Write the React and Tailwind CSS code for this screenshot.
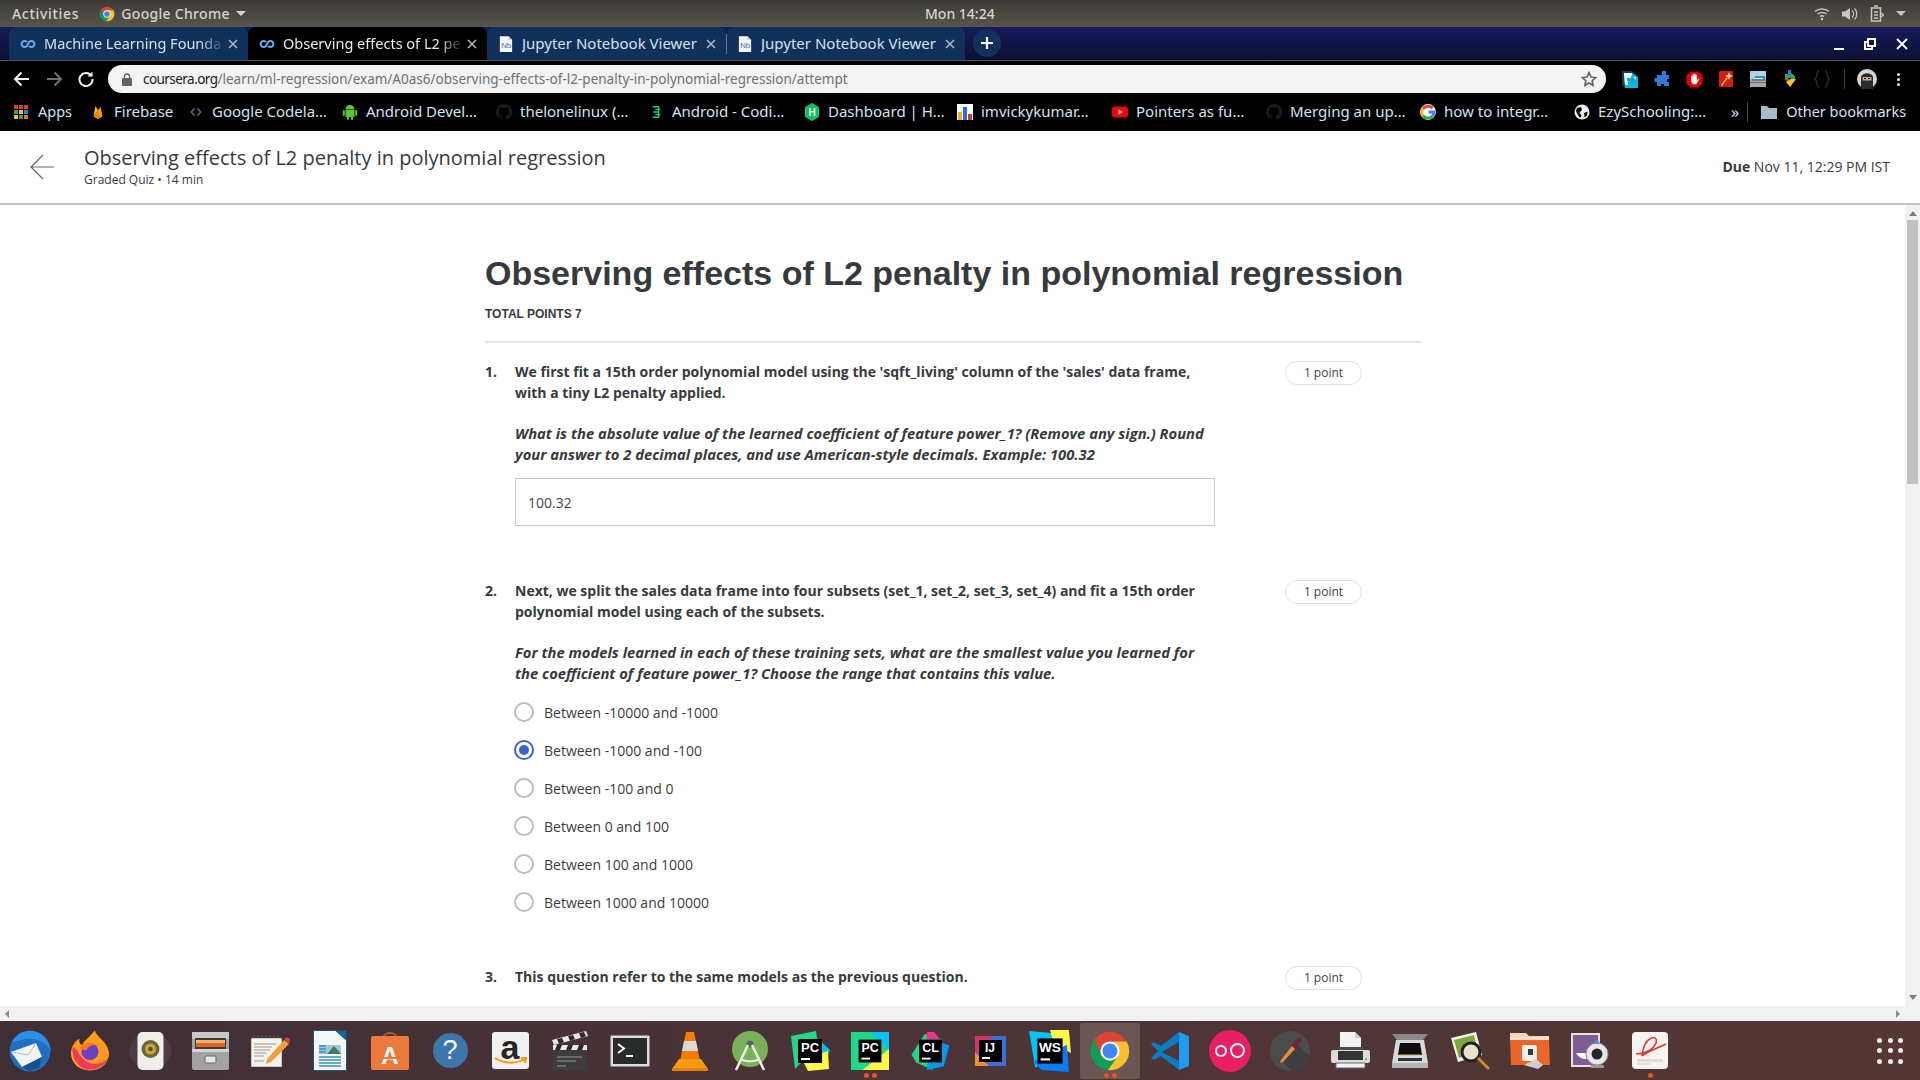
import React from 'react';

const UI_FONT = 'font-["Noto_Sans",sans-serif]';

const ChromeLogo = ({ size = 16 }) => (
  <svg width={size} height={size} viewBox="0 0 48 48">
    <path d="M5.9 11.5A22 22 0 0 1 43.05 13H24L14.47 29.5Z" fill="#db4437" />
    <path d="M5.9 11.5L14.47 29.5H33.53L21.5 45.9A22 22 0 0 1 5.9 11.5Z" fill="#0f9d58" />
    <path d="M43.05 13A22 22 0 0 1 21.5 45.9L33.53 29.5L24 13Z" fill="#fbc02d" />
    <circle cx="24" cy="24" r="11" fill="#fff" />
    <circle cx="24" cy="24" r="8.6" fill="#4285f4" />
  </svg>
);

const CourseraIcon = () => (
  <svg width="16" height="16" viewBox="0 0 16 16" fill="none" stroke="#6ea8e8" strokeWidth="2">
    <path d="M7 6.2A3 3 0 1 0 7 9.8L9 6.2A3 3 0 1 1 9 9.8" />
  </svg>
);

const NotebookIcon = () => (
  <svg width="14" height="16" viewBox="0 0 16 18">
    <path d="M1 0H11L15 4V18H1Z" fill="#f4f6f8" />
    <path d="M11 0L15 4H11Z" fill="#b6c2ce" />
    <text x="2.5" y="14" fontSize="9" fontFamily="Liberation Sans" fill="#3f6fb5">Nb</text>
  </svg>
);

const GithubMark = () => (
  <svg width="16" height="16" viewBox="0 0 16 16" fill="#1b1b1b">
    <path d="M8 0a8 8 0 0 0-2.5 15.6c.4.1.5-.2.5-.4v-1.4c-2.2.5-2.7-1-2.7-1-.4-.9-.9-1.2-.9-1.2-.7-.5.1-.5.1-.5.8.1 1.2.8 1.2.8.7 1.2 1.9.9 2.3.7.1-.5.3-.9.5-1.1-1.8-.2-3.6-.9-3.6-4 0-.9.3-1.6.8-2.1-.1-.2-.4-1 .1-2.1 0 0 .7-.2 2.2.8a7.6 7.6 0 0 1 4 0c1.5-1 2.2-.8 2.2-.8.4 1.1.2 1.9.1 2.1.5.5.8 1.2.8 2.1 0 3.1-1.9 3.8-3.7 4 .3.3.6.8.6 1.5v2.2c0 .2.1.5.6.4A8 8 0 0 0 8 0Z" />
  </svg>
);

const AppsGrid = () => (
  <div className="grid grid-cols-3 gap-[1px] w-[14px] h-[14px]">
    {['#e53935', '#e53935', '#e53935', '#43a047', '#fbc02d', '#1e88e5', '#fbc02d', '#43a047', '#e57b25'].map((color, i) => (
      <span key={i} className="block" style={{ backgroundColor: color }} />
    ))}
  </div>
);

const bookmarks = [
  {
    label: 'Firebase',
    width: 98,
    icon: (
      <svg width="14" height="18" viewBox="0 0 16 18">
        <path d="M3 14L5 2L8 7Z" fill="#ffc107" />
        <path d="M3 14L11 3L13 14L8 17Z" fill="#ffa000" />
        <path d="M3 14L8 8L11 14L8 17Z" fill="#f57c00" />
      </svg>
    ),
  },
  {
    label: 'Google Codela…',
    width: 154,
    icon: (
      <svg width="12" height="14" viewBox="0 0 16 16" fill="none" stroke="#4e6272" strokeWidth="2.5">
        <path d="M6 3L2 8L6 13M10 3L14 8L10 13" />
      </svg>
    ),
  },
  {
    label: 'Android Devel…',
    width: 154,
    icon: (
      <svg width="16" height="18" viewBox="0 0 16 18" fill="#5fc33b">
        <path d="M3.5 6.5a4.5 4.5 0 0 1 9 0Z" />
        <rect x="3.5" y="7" width="9" height="7" />
        <rect x="0.8" y="7" width="2" height="6" rx="1" />
        <rect x="13.2" y="7" width="2" height="6" rx="1" />
        <rect x="5" y="13" width="2" height="4" rx="1" />
        <rect x="9" y="13" width="2" height="4" rx="1" />
      </svg>
    ),
  },
  { label: 'thelonelinux (…', width: 152, icon: <GithubMark /> },
  {
    label: 'Android - Codi…',
    width: 156,
    icon: (
      <svg width="14" height="16" viewBox="0 0 16 16" fill="none" stroke="#2ecc71" strokeWidth="1.5">
        <path d="M4 2H11V14H4M7 5H13M5 8H11M7 11H13" />
      </svg>
    ),
  },
  {
    label: 'Dashboard | H…',
    width: 153,
    icon: (
      <svg width="16" height="18" viewBox="0 0 16 18">
        <path d="M8 0L15 4V14L8 18L1 14V4Z" fill="#12c25d" />
        <text x="8" y="13" textAnchor="middle" fontSize="10" fontWeight="700" fontFamily="Liberation Sans" fill="#fff">H</text>
      </svg>
    ),
  },
  {
    label: 'imvickykumar…',
    width: 155,
    icon: (
      <svg width="16" height="16" viewBox="0 0 16 16">
        <rect width="16" height="16" fill="#fff" />
        <rect x="1" y="8" width="4" height="8" fill="#f5a623" />
        <rect x="6" y="3" width="4" height="13" fill="#2a6fd6" />
        <rect x="11" y="10" width="4" height="6" fill="#d0392b" />
      </svg>
    ),
  },
  {
    label: 'Pointers as fu…',
    width: 154,
    icon: (
      <svg width="16" height="16" viewBox="0 0 16 16">
        <rect y="2.5" width="16" height="11" rx="3" fill="#ff0000" />
        <path d="M6.5 5.5L11 8L6.5 10.5Z" fill="#fff" />
      </svg>
    ),
  },
  { label: 'Merging an up…', width: 154, icon: <GithubMark /> },
  {
    label: 'how to integr…',
    width: 154,
    icon: (
      <svg width="16" height="16" viewBox="0 0 16 16" fill="none" strokeWidth="3">
        <circle cx="8" cy="8" r="7.9" fill="#fff" stroke="none" />
        <path d="M12.500 4.200A6 6 0 0 0 3 5" stroke="#ea4335" />
        <path d="M3 4.500A6 6 0 0 0 3 11.500" stroke="#fbbc05" />
        <path d="M3 11.500A6 6 0 0 0 12.500 12" stroke="#34a853" />
        <path d="M12.500 12A6 6 0 0 0 14 8H8.500" stroke="#4285f4" />
      </svg>
    ),
  },
  {
    label: 'EzySchooling:…',
    width: 154,
    icon: (
      <svg width="16" height="16" viewBox="0 0 16 16">
        <circle cx="8" cy="8" r="7.5" fill="#eceff1" />
        <path d="M3 4L7 3L8 6L5.5 8.5L7.5 11.5L6 14L3.5 10.5L2 7ZM10 9L13.5 7.5L13 11.5L10.5 13.5Z" fill="#000" />
      </svg>
    ),
  },
];

const extensions = [
  <svg key="a" width="16" height="17" viewBox="0 0 16 17">
    <path d="M0 0H10L15 5V17H3L0 14Z" fill="#123f66" />
    <path d="M2 2H10L16 6V17H3Z" fill="#10b4e0" />
    <path d="M2 2H10V6H14V9H6V14L3 14Z" fill="#f4fbfd" />
    <path d="M5 7H9V4.500L14 8.500L9 12.500V10H5Z" fill="#0fa7d8" />
  </svg>,
  <svg key="b" width="16" height="18" viewBox="0 0 16 18" fill="#2f7bd6">
    <path d="M8 1H12V5H15V9H13V12H15V16H10V14H7V16H3V12H0.5V8H3V5H8Z" />
  </svg>,
  <svg key="c" width="17" height="17" viewBox="0 0 18 18">
    <path d="M5 0.5H13L17.5 5V13L13 17.5H5L0.5 13V5Z" fill="#e60000" />
    <path d="M5.500 8V5H7V8.500V3.500H8.500V8V3H10V8V4H11.500V10L13 8L14 8.500L11 14H7.500L5.500 11.500Z" fill="#fff" />
  </svg>,
  <svg key="d" width="14" height="16" viewBox="0 0 14 16">
    <rect width="14" height="16" rx="1" fill="#d61a1a" />
    <path d="M2 14L8 6L9 7L3 15Z" fill="#f5c518" />
    <path d="M10 1L11 4L14 5L11 6L10 9L9 6L6 5L9 4Z" fill="#fff4c2" />
  </svg>,
  <svg key="e" width="16" height="16" viewBox="0 0 16 16">
    <rect width="16" height="8" fill="#a9d7ea" />
    <rect y="8" width="16" height="8" fill="#a7a7a4" />
    <path d="M2 8L6 5H15V10H2Z" fill="#4a86ad" />
    <rect x="3" y="7" width="10" height="1" fill="#e7f3f9" />
    <rect y="11" width="16" height="1" fill="#6b6b6b" />
  </svg>,
  <svg key="f" width="12" height="18" viewBox="0 0 12 18">
    <rect x="4" y="0" width="3" height="8" fill="#2f7bd6" />
    <rect x="1" y="4" width="3" height="6" fill="#2ea84f" />
    <path d="M7 3L11 6V10H7Z" fill="#2ea84f" />
    <path d="M0 9H7V14Z" fill="#d93025" />
    <path d="M7 9H12L6 17L2 12Z" fill="#fbc02d" />
  </svg>,
  <svg key="g" width="16" height="18" viewBox="0 0 16 18" fill="none" stroke="#2a2a2a" strokeWidth="1.5">
    <path d="M5 1C2 1 3.5 8 1 9C3.5 10 2 17 5 17M11 1C14 1 12.500 8 15 9C12.500 10 14 17 11 17" />
  </svg>,
];

const Arrow = ({ flip, color }) => (
  <svg width="18" height="16" viewBox="0 0 18 16" fill="none" stroke={color} strokeWidth="2" className={flip ? 'rotate-180' : ''}>
    <path d="M16 8H2M8.5 1.5L2 8L8.5 14.5" />
  </svg>
);

const Tab = ({ title, active, icon, fade, divider }) => (
  <div
    className={`relative flex items-center w-[239px] h-[33px] shrink-0 pl-[10px] pr-[10px] rounded-t-[8px] ${
      active ? 'bg-black text-[#e8edf2]' : 'bg-[#10315c] text-[#d5e2ef]'
    }`}
  >
    {divider && <span className="absolute left-0 top-[7px] h-[20px] w-px bg-[#5d7289]" />}
    <span className="w-[18px] flex justify-center shrink-0">{icon}</span>
    <span
      className={`ml-[7px] flex-1 overflow-hidden whitespace-nowrap ${
        fade ? 'text-[14.5px] [mask-image:linear-gradient(to_right,black_86%,transparent)]' : 'text-[15px]'
      }`}
    >
      {title}
    </span>
    <svg width="10" height="10" viewBox="0 0 10 10" stroke="#a9b7c6" strokeWidth="1.6" className="ml-[3px] shrink-0">
      <path d="M1 1L9 9M9 1L1 9" />
    </svg>
  </div>
);

const Question = ({ number, title, children }) => (
  <div className="flex">
    <div className="w-[30px] shrink-0 text-[14px] leading-[21px] font-bold">{number}.</div>
    <div className="w-[700px] shrink-0">
      <p className="text-[14px] leading-[21px] font-bold pr-[10px]">{title}</p>
      {children}
    </div>
    <div className="ml-[70px] w-[77px] h-[24px] shrink-0 rounded-full border border-[#e1e1e1] flex items-center justify-center text-[12px] text-[#444]">
      1 point
    </div>
  </div>
);

const Radio = ({ label, checked }) => (
  <div className="flex items-center h-[38px]">
    <span
      className={`ml-[-1px] w-[20px] h-[20px] rounded-full border-2 flex items-center justify-center ${
        checked ? 'border-[#3f5fd8]' : 'border-[#bdbdbd]'
      }`}
    >
      {checked && <span className="w-[10px] h-[10px] rounded-full bg-[#3f5fd8]" />}
    </span>
    <span className="ml-[10px] text-[14px] text-[#3c3c3c]">{label}</span>
  </div>
);

const JetBrainsTile = ({ label, colors, shapes, w = 40, h = 40 }) => (
  <svg width={w} height={h} viewBox="0 0 40 40">
    {shapes.map((d, i) => (
      <path key={i} d={d} fill={colors[i]} />
    ))}
    <rect x="8" y="8" width="24" height="24" fill="#000" />
    <text x="20" y="21" textAnchor="middle" fontSize="13" fontWeight="700" fontFamily="Liberation Sans" fill="#fff">{label}</text>
    <rect x="11" y="27" width="9" height="2" fill="#fff" />
  </svg>
);

const dockIcons = [
  <svg key="thunderbird" width="42" height="42" viewBox="0 0 42 42">
    <circle cx="21" cy="21" r="20.5" fill="#1f6fc2" />
    <path d="M3 12C8 3 18 -1 27 2C36 5 41 13 42 21C37 12 27 8 17 9Z" fill="#2a8fe8" />
    <path d="M2 22L27 13L33 27L13 37Z" fill="#f3f3f3" />
    <path d="M2 22L19 25L27 13" fill="none" stroke="#b9bec4" strokeWidth="1" />
    <path d="M13 37L33 27L30 38L20 41Z" fill="#16508f" />
  </svg>,
  <svg key="firefox" width="40" height="41" viewBox="0 0 42 42">
    <path d="M26 0C28 7 40 12 41 24C41 35 32 42 21 42C9 42 1 34 1 24C1 17 6 10 10 9C9 13 11 15 13 15C15 10 21 7 26 0Z" fill="#ff9a1f" />
    <path d="M3 17C1 30 10 41 21 41C30 41 38 36 40 28C34 37 20 37 14 30C8 24 8 19 3 17Z" fill="#ef3a5d" />
    <circle cx="21" cy="22" r="9" fill="#6c3fc4" />
    <path d="M10 19C14 12 22 12 27 15C22 15 18 18 17 21Z" fill="#ff7a1f" />
  </svg>,
  <svg key="speaker" width="43" height="38" viewBox="0 0 43 38">
    <ellipse cx="21.500" cy="19" rx="21" ry="18" fill="#5b4a55" opacity="0.5" />
    <rect x="8.500" y="0" width="26" height="38" rx="5" fill="#efeee8" />
    <circle cx="21.500" cy="17" r="9" fill="#6a6444" />
    <circle cx="21.500" cy="17" r="5.500" fill="#c7a928" />
    <circle cx="21.500" cy="17" r="2.200" fill="#4d4826" />
  </svg>,
  <svg key="cabinet" width="37" height="38" viewBox="0 0 37 38">
    <rect width="37" height="38" rx="2" fill="#a3a3a3" />
    <rect width="37" height="7" fill="#c9c9c9" />
    <rect x="3" y="6" width="31" height="11" fill="#3d3a39" />
    <rect x="4" y="8" width="29" height="3" fill="#f6b26b" />
    <rect x="4" y="11" width="29" height="4" fill="#e4602a" />
    <rect y="17" width="37" height="3" fill="#d5d5d5" />
    <rect x="13" y="24" width="11" height="7" rx="1" fill="#e6e6e6" stroke="#666" />
  </svg>,
  <svg key="notepad" width="40" height="32" viewBox="0 0 40 32">
    <rect x="1" y="3" width="31" height="29" fill="#f5f3e9" stroke="#474747" strokeWidth="0.5" />
    <path d="M4 3V0M8 3V0M12 3V0M16 3V0M20 3V0M24 3V0M28 3V0" stroke="#555" strokeWidth="1.2" />
    <path d="M4 9H26M4 12H22M4 15H20M4 18H16M4 21H14M4 26H14" stroke="#9a9a9a" />
    <path d="M17 24L34 5L39 9L21 27L16 29Z" fill="#f39c3c" />
    <path d="M34 5L36 2L40 4L39 9Z" fill="#d9453d" />
  </svg>,
  <svg key="writer" width="34" height="41" viewBox="0 0 34 41">
    <path d="M0.500 0.500H23L33.500 10V40.500H0.500Z" fill="#f4f6f7" stroke="#185a85" />
    <path d="M22 0.500H33.500V11Z" fill="#11669c" />
    <rect x="6" y="15" width="22" height="9" fill="#9ec6dc" />
    <path d="M14 24L21 16L28 24Z" fill="#3d7d57" />
    <path d="M6 16H13M6 19H13M6 22H13M6 27H28M6 30H28M6 33H28M6 36H28" stroke="#3b8ec0" strokeWidth="1.5" />
  </svg>,
  <svg key="software" width="38" height="39" viewBox="0 0 38 39">
    <path d="M12 8C12 0 26 0 26 8" fill="none" stroke="#b95a28" strokeWidth="2" />
    <rect y="5" width="38" height="34" rx="2" fill="#ec7a3d" />
    <text x="19" y="33" textAnchor="middle" fontSize="24" fontWeight="700" fontFamily="Liberation Sans" fill="#fff">A</text>
    <rect x="10" y="26" width="20" height="2" fill="#ec7a3d" />
  </svg>,
  <div key="help" className="w-[35px] h-[35px] rounded-full bg-[#3c76ab] flex items-center justify-center text-white text-[27px] font-['Liberation_Sans']">
    ?
  </div>,
  <div key="amazon" className="relative w-[37px] h-[37px] rounded-[3px] bg-[#f0f0f0] flex justify-center text-[#262626] text-[34px] leading-[30px] font-bold font-['Liberation_Sans']">
    a
    <svg width="34" height="10" viewBox="0 0 34 10" className="absolute left-[2px] bottom-[3px]" fill="none" stroke="#f39c12" strokeWidth="2">
      <path d="M1 2C10 8 22 8 31 3M27 2L32 2L31 7" />
    </svg>
  </div>,
  <svg key="clapper" width="36" height="39" viewBox="0 0 36 39">
    <path d="M0 9L34 0L36 5L2 14Z" fill="#e8e8e8" />
    <path d="M5 8L10 7L12 11L7 13ZM16 5L21 4L23 8L18 10ZM27 2L32 1L34 5L29 7Z" fill="#2b2b2b" />
    <rect x="1" y="14" width="34" height="25" fill="#3d3d3d" />
    <rect x="1" y="14" width="34" height="5" fill="#e8e8e8" />
    <path d="M5 14H10L8 19H3ZM16 14H21L19 19H14ZM27 14H32L30 19H25Z" fill="#2b2b2b" />
    <path d="M5 26H30M5 30H24M5 35H14" stroke="#9a9a9a" />
  </svg>,
  <svg key="terminal" width="40" height="32" viewBox="0 0 40 32">
    <rect x="0.500" y="0.500" width="39" height="31" rx="1" fill="#dcdcdc" />
    <rect x="3" y="3" width="34" height="26" fill="#2a2c2c" />
    <path d="M8 9L14 13.500L8 18" fill="none" stroke="#fff" strokeWidth="2" />
    <path d="M16 21H23" stroke="#fff" strokeWidth="2" />
  </svg>,
  <svg key="vlc" width="36" height="40" viewBox="0 0 36 40">
    <path d="M14 1H22L28 30H8Z" fill="#f57c00" />
    <path d="M12 10H24L26 20H10Z" fill="#d9d9d9" />
    <path d="M7 28H29L36 38H0Z" fill="#f39c12" />
    <rect y="37" width="36" height="3" fill="#e67e00" />
  </svg>,
  <svg key="astudio" width="36" height="40" viewBox="0 0 36 40">
    <circle cx="18" cy="18" r="18" fill="#79b159" />
    <circle cx="18" cy="13" r="3.500" fill="#55635b" />
    <path d="M16 14L4 39M20 14L32 39M8 28C14 31 22 31 28 28" fill="none" stroke="#e8efe8" strokeWidth="2.500" />
  </svg>,
  <JetBrainsTile
    key="pc1"
    label="PC"
    colors={['#21d789', '#07c3f2', '#fcf84a']}
    shapes={['M1 5L26 0L28 14L5 38Z', 'M26 6L40 19L36 28H26Z', 'M12 28L38 20L39 38L18 40Z']}
  />,
  <JetBrainsTile
    key="pc2"
    label="PC"
    w={38}
    h={38}
    colors={['#21d789', '#07c3f2', '#fcf84a']}
    shapes={['M0 0H40V40H0Z', 'M20 0H40V20Z', 'M12 40L40 18V40Z']}
  />,
  <JetBrainsTile
    key="cl"
    label="CL"
    w={39}
    h={38}
    colors={['#21d789', '#ed358c', '#009ae5']}
    shapes={['M0 24L14 2L32 8L22 40L5 32Z', 'M16 0L24 0L30 8H16Z', 'M20 8L40 14L34 36L16 40Z']}
  />,
  <svg key="ij" width="31" height="30" viewBox="0 0 31 30">
    <rect width="31" height="30" fill="#3b6ed8" />
    <path d="M0 0H18L0 20Z" fill="#d6336c" />
    <path d="M0 30V16L14 30Z" fill="#e9912f" />
    <rect x="4" y="4" width="23" height="22" fill="#000" />
    <text x="15" y="16" textAnchor="middle" fontSize="12" fontWeight="700" fontFamily="Liberation Sans" fill="#fff">IJ</text>
    <rect x="7" y="21" width="8" height="2" fill="#fff" />
  </svg>,
  <JetBrainsTile
    key="ws"
    label="WS"
    w={42}
    h={42}
    colors={['#07c3f2', '#fcf84a', '#087cfa']}
    shapes={['M0 1L24 3L26 24L6 36Z', 'M20 0L38 0L40 22L24 14Z', 'M4 30L36 14L38 40L12 38Z']}
  />,
  <ChromeLogo key="chrome" size={42} />,
  <svg key="vscode" width="38" height="38" viewBox="0 0 38 38">
    <path d="M28 0L38 4V34L28 38Z" fill="#1f9cf0" />
    <path d="M28 0V10L11 20L28 29V38L10 24L3 28L0 26L7 19L0 12L3 10L10 14Z" fill="#0a7cc4" />
  </svg>,
  <div key="oo" className="w-[42px] h-[42px] rounded-full bg-[#e91e63] flex items-center justify-center gap-[3px]">
    <span className="w-[12px] h-[12px] rounded-full border-2 border-white" />
    <span className="w-[15px] h-[15px] rounded-full border-2 border-white" />
  </div>,
  <svg key="picker" width="40" height="40" viewBox="0 0 40 40">
    <circle cx="20" cy="20" r="20" fill="#4c4c4c" />
    <path d="M26 13L40 25A20 20 0 0 1 22 40L11 29Z" fill="#3f3f3f" />
    <path d="M11 29L22 15L25 18L13 31L10 32Z" fill="#f08a3c" />
    <path d="M21 14L25 10L27 8L30 6L32 9L30 12L28 14L26 18Z" fill="#6d2436" />
  </svg>,
  <svg key="printer" width="39" height="37" viewBox="0 0 39 37">
    <path d="M9 0H24L30 6V18H9Z" fill="#f2f2f2" />
    <path d="M24 0L30 6H24Z" fill="#c9c9c9" />
    <path d="M7 15H32V19H7Z" fill="#4d4d4d" />
    <rect y="18" width="39" height="13" rx="2" fill="#dcdcdc" />
    <rect x="7" y="19" width="25" height="9" fill="#333" />
    <rect x="5" y="31" width="29" height="5" fill="#f2f2f2" stroke="#666" />
    <rect x="34" y="26" width="2" height="2" fill="#6fbf3f" />
  </svg>,
  <svg key="scanner" width="36" height="36" viewBox="0 0 36 36">
    <path d="M0 1H36L31 7H5Z" fill="#8a8a8a" />
    <path d="M4 7H32L36 30H0Z" fill="#d9d9d9" />
    <path d="M8 10H28L30 22H6Z" fill="#0d0d0d" />
    <path d="M7 22H29" stroke="#c9b35a" />
    <rect x="6" y="25" width="24" height="3" fill="#333" />
    <rect y="30" width="36" height="5" fill="#b5b5b5" />
  </svg>,
  <svg key="viewer" width="39" height="38" viewBox="0 0 39 38">
    <path d="M0 6L25 0L31 23L7 30Z" fill="#f3f3e8" />
    <path d="M3 8L23 3L27 20L8 26Z" fill="#7fa83c" />
    <circle cx="20" cy="20" r="9" fill="#e8e2d0" stroke="#222" strokeWidth="3" />
    <path d="M27 26L38 37" stroke="#c9892d" strokeWidth="3" />
  </svg>,
  <svg key="folder" width="40" height="37" viewBox="0 0 40 37">
    <path d="M0 1H16L19 4H39V10H0Z" fill="#f6d3b9" />
    <path d="M0 6H39L40 33H1Z" fill="#e9672b" />
    <rect y="5" width="39" height="3" fill="#f8e0cd" />
    <rect x="12" y="13" width="15" height="16" rx="2" fill="#f2efe6" />
    <rect x="18" y="17" width="5" height="6" fill="#3b3b3b" />
    <path d="M14 33L26 27L33 33L28 37Z" fill="#cfcfcf" />
  </svg>,
  <svg key="cheese" width="38" height="36" viewBox="0 0 38 36">
    <rect width="29" height="34" fill="#e6e2da" />
    <rect x="2" y="2" width="25" height="30" fill="#7d5d92" />
    <path d="M5 20C10 28 18 28 24 20Z" fill="#fff" />
    <circle cx="26" cy="21" r="11" fill="#e8e8e8" stroke="#888" />
    <circle cx="26" cy="21" r="5.500" fill="#23272e" />
    <circle cx="26" cy="9" r="2" fill="#4a90d9" />
    <rect x="20" y="32" width="13" height="3" fill="#999" />
  </svg>,
  <svg key="evince" width="36" height="37" viewBox="0 0 36 37">
    <rect width="36" height="37" rx="4" fill="#f6f4f2" />
    <path d="M10 24C12 3 27 2 24 11C21 19 10 22 4 22M10 24C14 20 26 16 34 12" fill="none" stroke="#d93a32" strokeWidth="1.5" />
    <path d="M5 27H31V30H5Z" fill="#dedbd8" />
    <path d="M5 32H18" stroke="#cfcbc8" />
  </svg>,
];

const dockDots = { 14: 2, 18: 2, 27: 1 };

const DockItem = ({ index, icon }) => (
  <div
    className={`relative w-[60px] h-[56px] shrink-0 flex items-center justify-center ${
      index === 18 ? 'bg-[#6b5654] rounded-[2px]' : ''
    }`}
  >
    {icon}
    {dockDots[index] && (
      <div className="absolute bottom-[1px] left-0 right-0 flex justify-center gap-[3px]">
        {Array.from({ length: dockDots[index] }).map((_, i) => (
          <span key={i} className="w-[5px] h-[5px] rounded-full bg-[#e9541f]" />
        ))}
      </div>
    )}
  </div>
);

const App = () => {
  return (
    <div className="w-[1920px] h-[1080px] flex flex-col overflow-hidden bg-white font-['Open_Sans',sans-serif] text-[#373a3c]">
      {/* ubuntu top bar */}
      <div className={`relative h-[27px] shrink-0 flex items-center justify-between bg-gradient-to-b from-[#3c3a36] to-[#58554d] text-[#d8d5ce] text-[14px] font-medium ${UI_FONT}`}>
        <div className="flex items-center pl-[12px]">
          <span className="tracking-[0.7px]">Activities</span>
          <span className="ml-[20px]"><ChromeLogo size={16} /></span>
          <span className="ml-[6px] tracking-[0.3px]">Google Chrome</span>
          <span className="ml-[6px] w-0 h-0 border-x-[5px] border-x-transparent border-t-[5px] border-t-[#d8d5ce]" />
        </div>
        <span className="absolute left-[925px]">Mon 14:24</span>
        <div className="flex items-center gap-[12px] pr-[14px]">
          <svg width="16" height="14" viewBox="0 0 16 14" fill="none" stroke="#c9c6bf" strokeWidth="1.5">
            <path d="M1 4.5C5 1 11 1 15 4.5M3.5 7C6 5 10 5 12.5 7M6 9.5C7 8.7 9 8.7 10 9.5" />
            <circle cx="8" cy="12" r="1.2" fill="#c9c6bf" stroke="none" />
          </svg>
          <svg width="16" height="14" viewBox="0 0 16 14" fill="#c9c6bf">
            <path d="M0 4.5H3L8 1V13L3 9.5H0Z" />
            <path d="M10 3.5C12 5.5 12 8.5 10 10.5M12.5 1.5C15.5 4.5 15.5 9.5 12.5 12.5" fill="none" stroke="#c9c6bf" strokeWidth="1.2" />
          </svg>
          <svg width="14" height="18" viewBox="0 0 14 18" fill="none" stroke="#c9c6bf" strokeWidth="1.5">
            <path d="M1.5 3H10.5V16H1.5ZM4 1H8M4 7H8M4 10H8M4 13H8" />
            <path d="M11 8L13.5 10L11 12" />
          </svg>
          <span className="w-0 h-0 border-x-[5px] border-x-transparent border-t-[5px] border-t-[#c9c6bf]" />
        </div>
      </div>

      {/* tab strip */}
      <div className={`relative h-[34px] shrink-0 flex items-end pl-[9px] bg-gradient-to-b from-[#171a5c] to-[#0d1033] border-b border-[#50525a] ${UI_FONT}`}>
        <Tab title="Machine Learning Founda" icon={<CourseraIcon />} fade />
        <Tab title="Observing effects of L2 pe" icon={<CourseraIcon />} active fade />
        <Tab title="Jupyter Notebook Viewer" icon={<NotebookIcon />} />
        <Tab title="Jupyter Notebook Viewer" icon={<NotebookIcon />} divider />
        <div className="ml-[8px] mb-[3px] w-[28px] h-[28px] rounded-full bg-[#10315c] flex items-center justify-center text-white">
          <svg width="14" height="14" viewBox="0 0 14 14" stroke="#fff" strokeWidth="2.2">
            <path d="M7 1V13M1 7H13" />
          </svg>
        </div>
        <div className="ml-auto flex items-center gap-[20px] pr-[12px] mb-[10px]">
          <span className="w-[10px] h-[2px] mt-[10px] bg-white" />
          <svg width="12" height="12" viewBox="0 0 12 12" fill="none" stroke="#fff" strokeWidth="2">
            <path d="M4 1H11V8H4ZM4 4H1V11H8V8" />
          </svg>
          <svg width="12" height="12" viewBox="0 0 12 12" stroke="#fff" strokeWidth="1.8">
            <path d="M1 1L11 11M11 1L1 11" />
          </svg>
        </div>
      </div>

      {/* toolbar */}
      <div className={`h-[33px] shrink-0 flex items-center pt-[3px] bg-black ${UI_FONT}`}>
        <div className="flex items-center pl-[13px] gap-[14px]">
          <Arrow color="#f1f3f4" />
          <Arrow color="#6b6f73" flip />
        </div>
        <svg width="18" height="18" viewBox="0 0 18 18" fill="none" stroke="#f1f3f4" strokeWidth="2" className="ml-[14px]">
          <path d="M14.5 6A6.5 6.5 0 1 0 15.5 9" />
          <path d="M15.5 1.5V6.5H10.5" fill="#f1f3f4" stroke="none" />
        </svg>
        <div className="ml-[13px] w-[1498px] h-[28px] rounded-full bg-[#f1f3f4] flex items-center pl-[14px] pr-[9px]">
          <svg width="10" height="13" viewBox="0 0 10 13" fill="#5f6368">
            <path d="M2.5 5V3.5a2.5 2.5 0 0 1 5 0V5" fill="none" stroke="#5f6368" strokeWidth="1.3" />
            <rect y="5" width="10" height="8" rx="1" />
          </svg>
          <span className="ml-[11px] text-[13.5px] text-[#6d7175] whitespace-nowrap">
            <span className="text-[#202124] tracking-[-0.55px]">coursera.org</span>/learn/ml-regression/exam/A0as6/observing-effects-of-l2-penalty-in-polynomial-regression/attempt
          </span>
          <svg width="16" height="16" viewBox="0 0 24 24" fill="none" stroke="#5f6368" strokeWidth="2.4" className="ml-auto">
            <path d="M12 2.5L15 9L22 9.8L16.8 14.5L18.2 21.5L12 18L5.8 21.5L7.2 14.5L2 9.8L9 9Z" />
          </svg>
        </div>
        <div className="flex items-center">
          <div className="ml-[8px] flex items-center">
            {extensions.map((icon) => (
              <span key={icon.key} className="w-[32px] flex justify-center">{icon}</span>
            ))}
          </div>
          <span className="ml-[6px] h-[20px] w-px bg-[#3c3c3c]" />
          <svg width="20" height="20" viewBox="0 0 20 20" className="ml-[12px]">
            <circle cx="10" cy="10" r="10" fill="#d8d5cf" />
            <path d="M4 20V8C5 3 15 3 16 8V20Z" fill="#2b2b2b" />
            <rect x="5.500" y="8" width="9" height="3.500" fill="#c9a98a" />
            <path d="M7 9.500H9M11 9.500H13" stroke="#111" />
          </svg>
          <span className="ml-[20px] flex flex-col gap-[2px]">
            <span className="w-[3px] h-[3px] rounded-full bg-[#e8eaed]" />
            <span className="w-[3px] h-[3px] rounded-full bg-[#e8eaed]" />
            <span className="w-[3px] h-[3px] rounded-full bg-[#e8eaed]" />
          </span>
        </div>
      </div>

      {/* bookmarks */}
      <div className={`h-[37px] shrink-0 flex items-center pb-[2px] bg-black text-[#d3e3f1] text-[15px] whitespace-nowrap ${UI_FONT}`}>
        <div className="flex items-center w-[90px] pl-[14px] text-[14.5px]">
          <AppsGrid />
          <span className="ml-[10px]">Apps</span>
        </div>
        {bookmarks.map((item) => (
          <div key={item.label} className="flex items-center shrink-0" style={{ width: item.width }}>
            <span className="w-[16px] flex justify-center">{item.icon}</span>
            <span className="ml-[8px]">{item.label}</span>
          </div>
        ))}
        <span className="ml-[3px] text-[16px]">»</span>
        <span className="ml-[8px] h-[20px] w-px bg-[#444]" />
        <svg width="16" height="14" viewBox="0 0 16 14" fill="#a9bcc6" className="ml-[13px]">
          <path d="M0 1H6L8 3H16V14H0Z" />
        </svg>
        <span className="ml-[9px] text-[14.5px]">Other bookmarks</span>
      </div>

      {/* course header */}
      <div className="h-[74px] shrink-0 flex items-center border-b-2 border-[#c4c4c4] pl-[30px] pr-[30px]">
        <svg width="24" height="26" viewBox="0 0 24 26" fill="none" stroke="#666" strokeWidth="1.2">
          <path d="M24 13H1M13 1L1 13L13 25" />
        </svg>
        <div className="ml-[30px] mb-[3px]">
          <div className="text-[20px] leading-[27px]">Observing effects of L2 penalty in polynomial regression</div>
          <div className="mt-[1px] text-[12px] leading-[16px]">Graded Quiz • 14 min</div>
        </div>
        <div className="ml-auto mb-[2px] text-[14px]">
          <span className="font-bold">Due</span> Nov 11, 12:29 PM IST
        </div>
      </div>

      {/* page + vertical scrollbar */}
      <div className="flex-1 min-h-0 flex">
        <div className="flex-1 min-w-0 overflow-hidden pl-[485px]">
          <h1 className="pt-[46px] text-[34px] leading-[44px] font-bold font-['Liberation_Sans'] whitespace-nowrap">
            Observing effects of L2 penalty in polynomial regression
          </h1>
          <div className="mt-[10px] text-[12px] leading-[18px] font-bold font-['Liberation_Sans']">TOTAL POINTS 7</div>
          <div className="mt-[18px] w-[936px] h-[2px] bg-[#e5e5e5]" />

          <div className="mt-[18px] w-[936px]">
            <Question
              number={1}
              title="We first fit a 15th order polynomial model using the 'sqft_living' column of the 'sales' data frame, with a tiny L2 penalty applied."
            >
              <p className="mt-[20px] text-[14.75px] leading-[21px] font-bold italic">
                What is the absolute value of the learned coefficient of feature power_1? (Remove any sign.) Round your answer to 2 decimal places, and use American-style decimals. Example: 100.32
              </p>
              <div className="mt-[13px] h-[48px] border border-[#c9ccd6] flex items-center pl-[12px] text-[14px] text-[#444]">
                100.32
              </div>
            </Question>
          </div>

          <div className="mt-[54px] w-[936px]">
            <Question
              number={2}
              title="Next, we split the sales data frame into four subsets (set_1, set_2, set_3, set_4) and fit a 15th order polynomial model using each of the subsets."
            >
              <p className="mt-[20px] text-[14.75px] leading-[21px] font-bold italic">
                For the models learned in each of these training sets, what are the smallest value you learned for the coefficient of feature power_1? Choose the range that contains this value.
              </p>
              <div className="mt-[9px]">
                <Radio label="Between -10000 and -1000" />
                <Radio label="Between -1000 and -100" checked />
                <Radio label="Between -100 and 0" />
                <Radio label="Between 0 and 100" />
                <Radio label="Between 100 and 1000" />
                <Radio label="Between 1000 and 10000" />
              </div>
            </Question>
          </div>

          <div className="mt-[45px] w-[936px]">
            <Question number={3} title="This question refer to the same models as the previous question." />
          </div>
        </div>

        <div className="w-[15px] shrink-0 bg-[#f1f1f1] flex flex-col items-center">
          <span className="mt-[6px] w-0 h-0 border-x-[4px] border-x-transparent border-b-[5px] border-b-[#7d7d7d]" />
          <span className="mt-[4px] w-[11px] h-[264px] bg-[#c1c1c1]" />
          <span className="mt-auto mb-[6px] w-0 h-0 border-x-[4px] border-x-transparent border-t-[5px] border-t-[#7d7d7d]" />
        </div>
      </div>

      {/* horizontal scrollbar */}
      <div className="h-[15px] shrink-0 bg-[#f1f1f1] flex items-center pl-[5px] pr-[20px] justify-between">
        <span className="w-0 h-0 border-y-[4px] border-y-transparent border-r-[4px] border-r-[#8a8a8a]" />
        <span className="w-0 h-0 border-y-[4px] border-y-transparent border-l-[4px] border-l-[#8a8a8a]" />
      </div>

      {/* dock */}
      <div className="h-[59px] shrink-0 flex items-center bg-gradient-to-r from-[#402e35] via-[#4c3437] to-[#553735]">
        {dockIcons.map((icon, index) => (
          <DockItem key={icon.key} index={index} icon={icon} />
        ))}
        <div className="ml-auto mr-[17px] grid grid-cols-3 gap-[5.5px]">
          {Array.from({ length: 9 }).map((_, i) => (
            <span key={i} className="w-[5px] h-[5px] rounded-full bg-[#f0eeec]" />
          ))}
        </div>
      </div>
    </div>
  );
};

export default App;
